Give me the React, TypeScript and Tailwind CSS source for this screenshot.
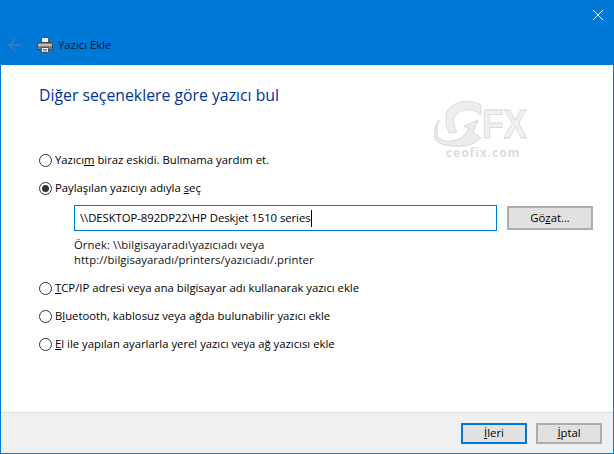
import { ArrowLeft } from "lucide-react";

const font = { fontFamily: '"Open Sans", "Noto Sans", sans-serif' };

function Radio({ checked = false }: { checked?: boolean }) {
  return (
    <span className="flex h-[13px] w-[13px] shrink-0 items-center justify-center rounded-full border border-[#333] bg-white">
      {checked && <span className="h-[7px] w-[7px] rounded-full bg-[#333]" />}
    </span>
  );
}

function Option({ checked, children }: { checked?: boolean; children: React.ReactNode }) {
  return (
    <div className="flex h-4 items-center gap-[3px]">
      <Radio checked={checked} />
      <span className="whitespace-nowrap">{children}</span>
    </div>
  );
}

function PrinterIcon() {
  return (
    <svg width="16" height="16" viewBox="0 0 16 16" className="block">
      <rect x="4.5" y="0.5" width="7" height="5" fill="#f4f4f4" stroke="#555" />
      <path d="M0.5 7 L2.5 5.5 H13.5 L15.5 7 V12.5 H0.5 Z" fill="#7d8288" stroke="#44484c" />
      <rect x="1" y="7" width="14" height="2" fill="#b9bec3" />
      <rect x="4.5" y="10.5" width="7" height="5" fill="#fff" stroke="#555" />
      <path d="M6 12.5 H10 M6 14 H10" stroke="#3a7fc4" />
    </svg>
  );
}

function Watermark() {
  return (
    <div className="absolute left-[433px] top-[35px] h-[60px] w-[100px] select-none">
      <svg width="100" height="48" viewBox="0 0 100 48" className="absolute left-0 top-0">
        <path
          d="M47 5 C40 1 32 1 27 2 C18 4 11 10 12 18 C12 24 13 29 15 33 L23 32 C20 28 19 22 20 18 C22 12 30 9 36 10 C40 10 44 12 47 15 Z"
          fill="#eeeeee"
          stroke="#dadada"
        />
        <path
          d="M5 20 C1 26 -1 33 1 38 C3 44 14 47 30 46 C37 45 43 42 47 38 L39 32 L44 20 L30 26 L35 29 C31 35 27 39 22 40 C14 42 8 42 4 37 C2 32 3 25 5 20 Z"
          fill="#ececec"
          stroke="#d6d6d6"
        />
        <text
          x="48"
          y="38"
          fontFamily='"Liberation Sans", sans-serif'
          fontWeight="700"
          fontSize="41"
          fill="#f1f1f1"
          stroke="#d8d8d8"
          strokeWidth="0.8"
          textLength="45"
          lengthAdjust="spacingAndGlyphs"
        >
          FX
        </text>
      </svg>
      <div className="absolute left-[12px] top-[46px] text-[12px] font-bold leading-[14px] tracking-[0.95px] text-[#dcdcdc]">
        ceofix.com
      </div>
    </div>
  );
}

export default function App() {
  return (
    <div
      className="relative flex h-[454px] w-[614px] flex-col overflow-hidden border-x border-b border-[#0078d7] bg-white text-[11.3px] leading-4 text-black"
      style={font}
    >
      <div className="-mx-px flex h-[65px] shrink-0 flex-col bg-[#0078d7]">
        <div className="flex h-[30px] items-start justify-end pr-[11px] pt-[10px]">
          <svg width="10" height="10" viewBox="0 0 10 10" className="block">
            <path d="M0 0 L10 10 M10 0 L0 10" stroke="#fff" />
          </svg>
        </div>
        <div className="flex h-[30px] items-center pl-[5px]">
          <ArrowLeft size={20} strokeWidth={1.6} className="text-[#3f7fb5]" />
          <span className="ml-[12px]">
            <PrinterIcon />
          </span>
          <span className="ml-[5px] text-[#001a33]">Yazıcı Ekle</span>
        </div>
      </div>

      <div className="relative flex-1 pl-[38px] pr-5">
        <h1 className="mt-[20px] text-[15.8px] font-normal leading-5 text-[#003399]">
          Diğer seçeneklere göre yazıcı bul
        </h1>
        <Watermark />
        <div className="mt-[47px] flex flex-col">
          <Option>
            Yazıcı<u>m</u> biraz eskidi. Bulmama yardım et.
          </Option>
          <div className="mt-3">
            <Option checked>
              Paylaşılan yazıcıyı adıyla <u>s</u>eç
            </Option>
          </div>
          <div className="mt-[9px] flex items-center gap-[10px] pl-[35px]">
            <div className="flex h-[26px] w-[424px] items-center border border-[#0078d7] pl-[5px]">
              <span className="whitespace-nowrap tracking-[-0.05px]">\\DESKTOP-892DP22\HP Deskjet 1510 series</span>
              <span className="h-[17px] w-px bg-black" />
            </div>
            <button className="h-[24px] w-[86px] border-2 border-[#adadad] bg-[#e1e1e1] leading-4">
              Gö<u>z</u>at...
            </button>
          </div>
          <div className="mt-[6px] pl-[35px] leading-[15px] tracking-[0.06px] text-[#111]">
            <div>Örnek: \\bilgisayaradı\yazıcıadı veya</div>
            <div>http://bilgisayaradı/printers/yazıcıadı/.printer</div>
          </div>
          <div className="mt-[13px]">
            <Option>
              <u>T</u>CP/IP adresi veya ana bilgisayar adı kullanarak yazıcı ekle
            </Option>
          </div>
          <div className="mt-3">
            <Option>
              B<u>l</u>uetooth, kablosuz veya ağda bulunabilir yazıcı ekle
            </Option>
          </div>
          <div className="mt-3">
            <Option>
              <u>E</u>l ile yapılan ayarlarla yerel yazıcı veya ağ yazıcısı ekle
            </Option>
          </div>
        </div>
      </div>

      <div className="flex h-[41px] shrink-0 items-center justify-end gap-[9px] border-t border-[#dfdfdf] bg-[#f0f0f0] pr-[11px]">
        <button className="h-[21px] w-[66px] border-2 border-[#0078d7] bg-[#e1e1e1] leading-4">
          <u>İ</u>leri
        </button>
        <button className="h-[21px] w-[66px] border-2 border-[#adadad] bg-[#e1e1e1] leading-4">
          <u>İ</u>ptal
        </button>
      </div>
    </div>
  );
}
